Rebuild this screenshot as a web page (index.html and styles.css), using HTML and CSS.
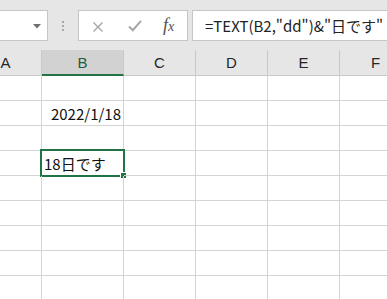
FILE: index.html
```html
<!DOCTYPE html>
<html lang="ja">
<head>
<meta charset="utf-8">
<link rel="stylesheet" href="styles.css">
</head>
<body>
<div class="app">
  <div class="topbar">
    <div class="namebox">
      <svg class="drop" width="8" height="5" viewBox="0 0 8 5"><path d="M0 0H8L4 4.5Z" fill="#6f6f6f"/></svg>
    </div>
    <div class="grip"><span></span><span></span><span></span></div>
    <div class="buttons">
      <svg class="ico" width="12" height="12" viewBox="0 0 12 12"><path d="M1.5 1.5L10.5 10.5M10.5 1.5L1.5 10.5" stroke="#a6a6a6" stroke-width="1.4" fill="none"/></svg>
      <svg class="ico" width="14" height="13" viewBox="0 0 14 13"><path d="M1 7.5L4.8 11.2L13 1.8" stroke="#a6a6a6" stroke-width="2" fill="none"/></svg>
      <span class="fx">f<span class="sub">x</span></span>
    </div>
    <div class="formula">=TEXT(B2,"dd")&amp;"日です"</div>
  </div>
  <div class="sheet">
    <div class="hdr">A</div>
    <div class="hdr sel">B</div>
    <div class="hdr">C</div>
    <div class="hdr">D</div>
    <div class="hdr">E</div>
    <div class="hdr">F</div>

    <div class="cell"></div><div class="cell"></div><div class="cell"></div><div class="cell"></div><div class="cell"></div><div class="cell"></div>

    <div class="cell"></div><div class="cell num">2022/1/18</div><div class="cell"></div><div class="cell"></div><div class="cell"></div><div class="cell"></div>

    <div class="cell"></div><div class="cell"></div><div class="cell"></div><div class="cell"></div><div class="cell"></div><div class="cell"></div>

    <div class="cell"></div><div class="cell active">18日です<div class="selbox"><div class="handle"></div></div></div><div class="cell"></div><div class="cell"></div><div class="cell"></div><div class="cell"></div>

    <div class="cell"></div><div class="cell"></div><div class="cell"></div><div class="cell"></div><div class="cell"></div><div class="cell"></div>
    <div class="cell"></div><div class="cell"></div><div class="cell"></div><div class="cell"></div><div class="cell"></div><div class="cell"></div>
    <div class="cell"></div><div class="cell"></div><div class="cell"></div><div class="cell"></div><div class="cell"></div><div class="cell"></div>
    <div class="cell"></div><div class="cell"></div><div class="cell"></div><div class="cell"></div><div class="cell"></div><div class="cell"></div>
    <div class="cell"></div><div class="cell"></div><div class="cell"></div><div class="cell"></div><div class="cell"></div><div class="cell"></div>
  </div>
</div>
</body>
</html>
```
FILE: styles.css
```css
* { box-sizing: border-box; }
html, body { margin: 0; padding: 0; background: #fff; }
body {
  width: 387px;
  height: 299px;
  overflow: hidden;
  font-family: "Noto Sans CJK JP", "Noto Sans", sans-serif;
}
.app { width: 387px; height: 299px; overflow: hidden; }
.topbar {
  height: 50px;
  background: #e6e6e6;
  display: flex;
  align-items: flex-start;
  padding-top: 10px;
  white-space: nowrap;
}
.namebox {
  flex: none;
  width: 48px;
  height: 31px;
  background: #fff;
  border: 1px solid #c6c6c6;
  border-left: none;
  display: flex;
  align-items: center;
  justify-content: flex-end;
  padding-right: 6px;
}
.drop { display: block; margin-top: 1px; }
.grip {
  flex: none;
  width: 30px;
  height: 31px;
  display: flex;
  flex-direction: column;
  align-items: center;
  justify-content: center;
  gap: 2px;
}
.grip span { width: 2px; height: 2px; background: #a8a8a8; display: block; }
.buttons {
  flex: none;
  width: 110px;
  height: 31px;
  background: #fff;
  border: 1px solid #c6c6c6;
  display: flex;
  align-items: center;
  padding-left: 13px;
  gap: 0;
}
.ico { display: block; flex: none; }
.buttons .ico:first-child { margin-right: 24px; margin-top: 2px; }
.buttons .ico:nth-child(2) { margin-right: 21px; }
.fx {
  font-family: "Liberation Serif", serif;
  font-style: italic;
  font-size: 18px;
  color: #505050;
  line-height: 1;
  margin-top: -1px;
}
.fx .sub { font-size: 14px; }
.formula {
  flex: none;
  margin-left: 4px;
  width: 220px;
  height: 31px;
  background: #fff;
  border: 1px solid #c6c6c6;
  border-right: none;
  padding-left: 12px;
  font-size: 15px;
  line-height: 29px;
  color: #222;
}
.sheet {
  margin-left: -30px;
  display: grid;
  grid-template-columns: 72px 82px 72px 72px 72px 72px;
  grid-auto-rows: 25px;
  grid-template-rows: 26px;
}
.hdr {
  background: #e6e6e6;
  border-right: 1px solid #c9c9c9;
  border-bottom: 1px solid #c9c9c9;
  display: flex;
  align-items: center;
  justify-content: center;
  font-size: 15px;
  color: #262626;
  font-family: "Liberation Sans", "Noto Sans", sans-serif;
}
.hdr.sel {
  background: #d2d2d2;
  color: #1f5d44;
  border-bottom: 2px solid #217346;
}
.cell {
  border-right: 1px solid #d4d4d4;
  border-bottom: 1px solid #d4d4d4;
  font-size: 15px;
  color: #111;
  display: flex;
  align-items: center;
  white-space: nowrap;
  position: relative;
}
.cell.num { justify-content: flex-end; padding-right: 2px; }
.cell.active { padding-left: 2px; }
.selbox {
  position: absolute;
  top: -2px; left: -2px; right: -2px; bottom: -2px;
  border: 2px solid #217346;
}
.handle {
  position: absolute;
  right: -3px;
  bottom: -3px;
  width: 5px;
  height: 5px;
  background: #217346;
  box-shadow: 0 0 0 1px #fff;
}
```
